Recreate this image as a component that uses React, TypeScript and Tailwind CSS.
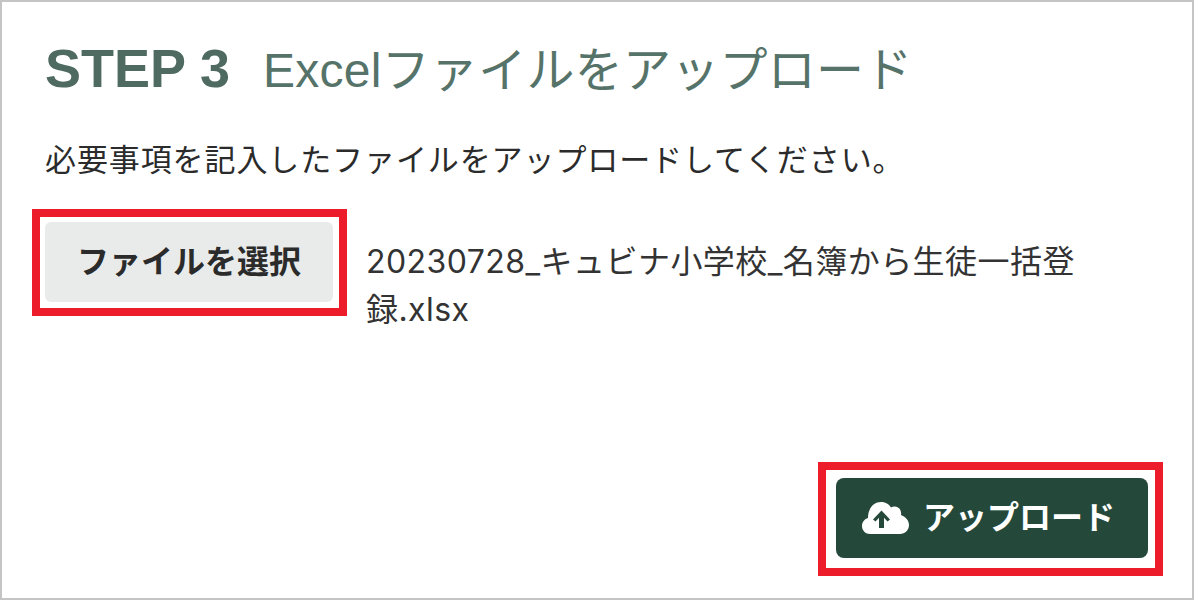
import React from 'react';

const fontStack = { fontFamily: '"Liberation Sans", "Noto Sans CJK JP", sans-serif' };
const fileNameFont = { fontFamily: 'Inter, "Noto Sans CJK JP", sans-serif' };

const CloudUpload = () => (
  <svg width="47" height="32" viewBox="0 0 47 32" className="shrink-0">
    <path
      fill="#fff"
      d="M8 32C3.500 32 0 28.500 0 24c0-4 2.500-7 6-8C6 7 11 0 19 0c5 0 8.500 2.500 10 5.500 2-1.500 5-1.500 7 0 2.500 1.500 3.500 4.500 3 7.500 4 1.500 8 5 8 10 0 5-4 9-9 9H8z"
    />
    <path fill="#24493b" d="M19.500 8.500l8.500 9-2.500 2-3.500-3.700V26h-5V15.800l-3.500 3.700-2.500-2z" />
  </svg>
);

export default function App() {
  return (
    <div className="w-[1194px] h-[600px] bg-white border-2 border-[#c4c4c4] flex flex-col pl-[43px] pt-[36px] overflow-hidden" style={fontStack}>
      <h1 className="flex items-baseline text-[#56736a] leading-[60px] whitespace-nowrap">
        <span className="text-[54px] font-bold w-[218px] text-[#4f6b61]">STEP 3</span>
        <span className="text-[48px] font-normal tracking-[0.250px]">Excelファイルをアップロード</span>
      </h1>
      <p className="mt-[40px] text-[31px] leading-[40px] tracking-[0.900px] text-[#2b2b2b] whitespace-nowrap">必要事項を記入したファイルをアップロードしてください。</p>
      <div className="mt-[28px] flex items-start">
        <div className="-ml-[13px] border-[8px] border-[#ec1c2b] pt-[5px] pl-[5px] pr-[6px] pb-[6px]">
          <button className="w-[288px] h-[80px] rounded-md bg-[#e9ebea] text-[32px] font-bold text-[#2b2b2b]">ファイルを選択</button>
        </div>
        <p className="ml-[19px] mt-[29px] w-[730px] text-[32px] leading-[48px] tracking-[0.450px] text-[#333]" style={fileNameFont}>
          20230728_キュビナ小学校_名簿から生徒一括登録.xlsx
        </p>
      </div>
      <div className="mt-[128px] flex justify-end pr-[29px]">
        <div className="border-[8px] border-[#ec1c2b] pt-[8px] pb-[10px] pl-[10px] pr-[7px]">
          <button className="w-[312px] h-[80px] rounded-lg bg-[#24493b] text-white text-[32px] font-semibold flex items-center pl-[26px] gap-[14px]">
            <CloudUpload />
            アップロード
          </button>
        </div>
      </div>
    </div>
  );
}
